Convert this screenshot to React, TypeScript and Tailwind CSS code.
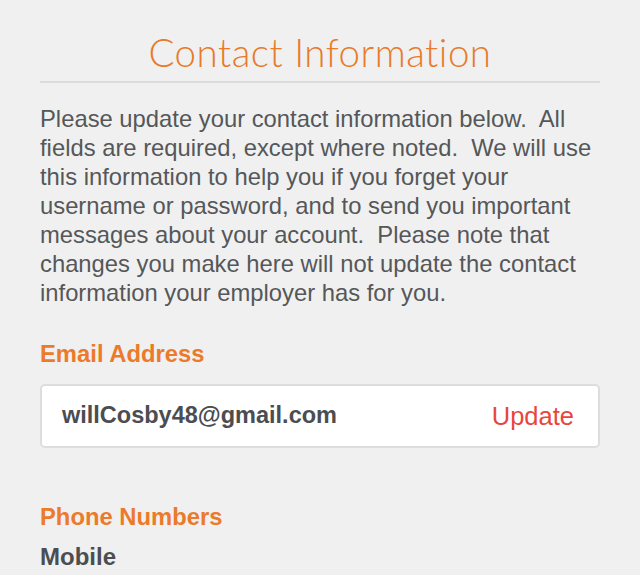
const lines = [
  "Please update your contact information below.\u00a0 All",
  "fields are required, except where noted.\u00a0 We will use",
  "this information to help you if you forget your",
  "username or password, and to send you important",
  "messages about your account.\u00a0 Please note that",
  "changes you make here will not update the contact",
  "information your employer has for you.",
];

const App = () => {
  return (
    <div className="min-h-[575px] bg-[#f0f0f0] px-10 font-['Liberation_Sans',Arial,sans-serif]">
      {/* Header */}
      <div className="pt-[30px] pb-[7px] border-b-2 border-[#dcdcdc] text-center">
        <h1 className="font-['Lato',sans-serif] font-light text-[38.5px] leading-[44px] text-[#e87a2a] tracking-[0.5px]">
          Contact Information
        </h1>
      </div>

      <p className="mt-[21px] text-[23.8px] leading-[29px] text-[#555759] whitespace-nowrap">
        {lines.map((line) => (
          <span key={line} className="block">
            {line}
          </span>
        ))}
      </p>

      {/* Email */}
      <h2 className="mt-[33px] text-[23.8px] leading-[28px] font-bold text-[#ec7a2b]">
        Email Address
      </h2>
      <div className="mt-[16px] h-[64px] bg-white border-2 border-[#dddddd] rounded-[5px] flex items-center justify-between pl-[20px] pr-[24px]">
        <span className="text-[23.5px] font-bold text-[#4b4d51]">
          willCosby48@gmail.com
        </span>
        <button className="text-[25.5px] text-[#e8463d]">Update</button>
      </div>

      {/* Phone */}
      <h2 className="mt-[55px] text-[23.8px] leading-[28px] font-bold text-[#ec7a2b]">
        Phone Numbers
      </h2>
      <div className="mt-[12px] text-[24px] leading-[28px] font-bold text-[#4b4d51]">
        Mobile
      </div>
    </div>
  );
};

export default App;
